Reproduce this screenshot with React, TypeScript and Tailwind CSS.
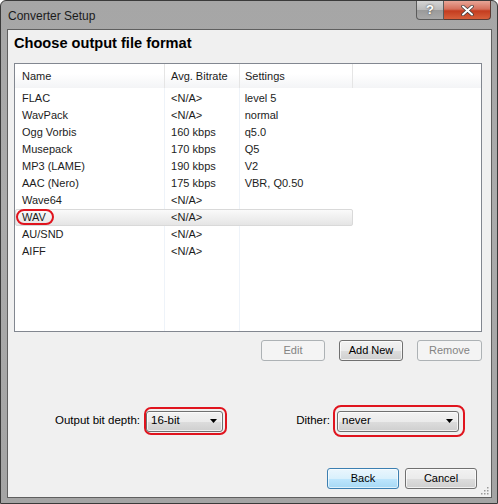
import React from 'react';

const rows = [
  { name: 'FLAC', rate: '<N/A>', settings: 'level 5' },
  { name: 'WavPack', rate: '<N/A>', settings: 'normal' },
  { name: 'Ogg Vorbis', rate: '160 kbps', settings: 'q5.0' },
  { name: 'Musepack', rate: '170 kbps', settings: 'Q5' },
  { name: 'MP3 (LAME)', rate: '190 kbps', settings: 'V2' },
  { name: 'AAC (Nero)', rate: '175 kbps', settings: 'VBR, Q0.50' },
  { name: 'Wave64', rate: '<N/A>', settings: '' },
  { name: 'WAV', rate: '<N/A>', settings: '', selected: true },
  { name: 'AU/SND', rate: '<N/A>', settings: '' },
  { name: 'AIFF', rate: '<N/A>', settings: '' },
];

function Button({ label, disabled, primary, className = '' }: { label: string; disabled?: boolean; primary?: boolean; className?: string }) {
  const look = disabled
    ? 'border-[#adb2b5] bg-[#f4f4f4] text-[#838383]'
    : primary
      ? 'border-[#3c7fb1] bg-[linear-gradient(#eaf6fd_0%,#d9f0fc_50%,#bee6fd_51%,#a7d9f5_100%)] text-black shadow-[inset_0_0_0_1px_#ffffffa0]'
      : 'border-[#707070] bg-[linear-gradient(#f2f2f2_0%,#ebebeb_50%,#dddddd_51%,#cfcfcf_100%)] text-black shadow-[inset_0_0_0_1px_#ffffffb0]';
  return (
    <div className={`flex h-[21px] items-center justify-center rounded-[3px] border text-[11px] ${look} ${className}`}>
      {label}
    </div>
  );
}

function Combo({ value, width }: { value: string; width: string }) {
  return (
    <div className={`flex h-[21px] ${width} items-center justify-between rounded-[3px] border border-[#707070] bg-[linear-gradient(#f2f2f2_0%,#ebebeb_50%,#dddddd_51%,#cfcfcf_100%)] pl-[4px] pr-[5px] text-[11.5px] text-black shadow-[inset_0_0_0_1px_#ffffffb0]`}>
      <span>{value}</span>
      <svg width="7" height="4" viewBox="0 0 7 4"><path d="M0 0h7L3.5 4z" fill="#000" /></svg>
    </div>
  );
}

export default function App() {
  return (
    <div
      className="relative h-[504px] w-[498px] overflow-hidden rounded-t-[6px] border border-[#3a3a3a] bg-[linear-gradient(180deg,#a6a6a6_0%,#ababab_40%,#a4a4a4_100%)] text-black"
      style={{ fontFamily: '"Liberation Sans", Arial, sans-serif' }}
    >
      {/* title bar */}
      <div className="flex h-[28px] items-start justify-between">
        <div className="pl-[7px] pt-[8px] text-[12px] leading-[15px] text-[#1b1b1b]">Converter Setup</div>
        <div className="mr-[6px] flex">
          <div className="flex h-[19px] w-[28px] items-center justify-center rounded-bl-[4px] border border-t-0 border-[#5b5b5b] bg-[linear-gradient(#d4d4d4_0%,#b9b9b9_50%,#9a9a9a_51%,#a9a9a9_100%)] text-[13px] font-bold text-white [text-shadow:0_0_2px_#333]">
            ?
          </div>
          <div className="flex h-[19px] w-[47px] items-center justify-center rounded-br-[4px] border border-l-0 border-t-0 border-[#5b3a33] bg-[linear-gradient(#e8a597_0%,#d5705c_45%,#c43c1f_55%,#d7603b_100%)]">
            <svg width="13" height="11" viewBox="0 0 13 11">
              <path d="M2 1.5l9 8M11 1.5l-9 8" stroke="#3a3a3a" strokeWidth="3.4" strokeLinecap="round" />
              <path d="M2 1.5l9 8M11 1.5l-9 8" stroke="#fff" strokeWidth="2" strokeLinecap="round" />
            </svg>
          </div>
        </div>
      </div>

      {/* client area */}
      <div className="relative ml-[6px] h-[469px] w-[485px] border border-[#5f5f5f] bg-[#f0f0f0]">
        <div className="pl-[6px] pt-[4px] text-[14.6px] font-bold leading-[18px]">Choose output file format</div>

        {/* list view */}
        <div className="relative ml-[6px] mt-[11px] h-[269px] w-[468px] border border-[#828790] bg-white text-[11px]">
          <div className="flex h-[24px] bg-[linear-gradient(#ffffff_0%,#ffffff_40%,#f3f4f6_100%)] text-[#1c1c1c]">
            <div className="flex w-[150px] items-center border-r border-[#e5e5e5] pl-[7px]">Name</div>
            <div className="flex w-[75px] items-center border-r border-[#e5e5e5] pl-[6px]">Avg. Bitrate</div>
            <div className="flex w-[113px] items-center border-r border-[#e5e5e5] pl-[5px]">Settings</div>
            <div className="flex-1" />
          </div>
          <div className="relative flex h-[243px]">
            <div className="w-[150px] border-r border-[#eef3f9]" />
            <div className="w-[75px] border-r border-[#eef3f9]" />
            <div className="w-[113px]" />
          </div>
          <div className="absolute left-0 right-0 top-[26px]">
            {rows.map((r) => (
              <div
                key={r.name}
                className={`flex h-[17px] w-[338px] items-center text-[#1c1c1c] ${r.selected ? 'rounded-[2px] border border-[#d9d9d9] bg-[linear-gradient(#fafafa,#e5e5e5)]' : 'border border-transparent'}`}
              >
                <div className="w-[150px] pl-[6px]">{r.name}</div>
                <div className="w-[75px] pl-[6px]">{r.rate}</div>
                <div className="w-[113px] pl-[5px]">{r.settings}</div>
              </div>
            ))}
          </div>
          {/* red marker around WAV */}
          <div className="absolute left-[1px] top-[145px] h-[16px] w-[38px] rounded-full border-2 border-[#e0141e]" />
        </div>

        {/* list buttons */}
        <div className="ml-[253px] mt-[8px] flex w-[221px] gap-[14px]">
          <Button label="Edit" disabled className="w-[64px]" />
          <Button label="Add New" className="w-[64px]" />
          <Button label="Remove" disabled className="w-[65px]" />
        </div>

        {/* bit depth and dither */}
        <div className="mt-[44px] flex h-[32px] items-center text-[11.5px]">
          <div className="flex w-[136px] justify-end pr-[4px]">Output bit depth:</div>
          <div className="flex h-[28px] w-[83px] items-center rounded-[7px] border-2 border-[#e0141e]">
            <Combo value="16-bit" width="w-[77px]" />
          </div>
          <div className="flex w-[106px] justify-end pr-[3px]">Dither:</div>
          <div className="flex h-[32px] w-[132px] items-center rounded-[8px] border-2 border-[#e0141e] pl-[2px]">
            <Combo value="never" width="w-[122px]" />
          </div>
        </div>

        {/* back / cancel */}
        <div className="ml-[319px] mt-[31px] flex gap-[6px]">
          <Button label="Back" primary className="w-[72px]" />
          <Button label="Cancel" className="w-[72px]" />
        </div>

        {/* resize grip */}
        <svg className="absolute bottom-[2px] right-[2px]" width="9" height="9" viewBox="0 0 9 9">
          {[[7, 1], [7, 4], [4, 4], [7, 7], [4, 7], [1, 7]].map(([x, y]) => (
            <rect key={`${x}-${y}`} x={x} y={y} width="1.5" height="1.5" fill="#9a9a9a" />
          ))}
        </svg>
      </div>
    </div>
  );
}
